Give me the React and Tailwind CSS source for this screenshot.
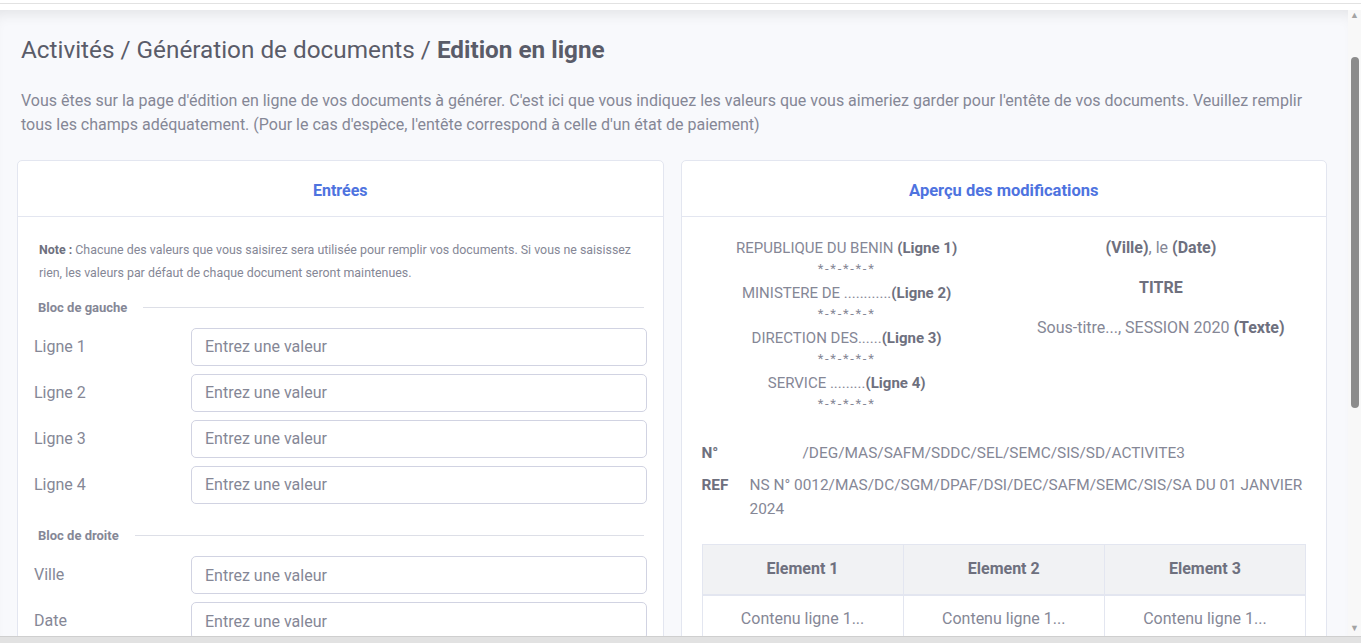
import { useState } from 'react';

const gauche = ['Ligne 1', 'Ligne 2', 'Ligne 3', 'Ligne 4'];
const droite = ['Ville', 'Date'];

const Champ = ({ label, value, onChange }) => (
  <div className="grid grid-cols-[157px_1fr] items-center">
    <label className="text-[16px] text-[#858796]">{label}</label>
    <input
      type="text"
      value={value}
      onChange={(e) => onChange(e.target.value)}
      placeholder="Entrez une valeur"
      className="h-[38px] w-full rounded-[5px] border border-[#d1d3e2] bg-white px-[13px] text-[16px] text-[#6e707e] placeholder:text-[#858796] outline-none"
    />
  </div>
);

const Legende = ({ children }) => (
  <div className="flex items-center gap-[16px] pl-[4px] pr-[3px]">
    <span className="text-[13px] font-bold text-[#858796]">{children}</span>
    <span className="h-px flex-1 bg-[#dddfe7]" />
  </div>
);

const Etoiles = () => <div className="text-[13px] leading-[20px] tracking-[1.7px] text-[#858796]">*-*-*-*-*</div>;

export default function App() {
  const [valeurs, setValeurs] = useState({});
  const maj = (k) => (v) => setValeurs((prev) => ({ ...prev, [k]: v }));

  return (
    <div className="flex h-screen flex-col overflow-hidden bg-white font-['Roboto',sans-serif]">
      <div className="h-[4px] border-b border-[#e2e2e2]" />
      <div className="h-[6px]" />
      <div className="flex min-h-0 flex-1">
        <main className="min-w-0 flex-1 overflow-hidden bg-[#f8f9fc] pl-[17px] pr-[21px] shadow-[inset_0_12px_14px_-8px_rgba(0,0,0,0.09)]">
          <h1 className="ml-[4px] mt-[25px] text-[24.3px] leading-[30px] text-[#5a5c69]">
            Activités / Génération de documents / <b className="font-bold">Edition en ligne</b>
          </h1>
          <p className="ml-[4px] mt-[24px] text-[16px] leading-[24px] text-[#858796]">
            Vous êtes sur la page d'édition en ligne de vos documents à générer. C'est ici que vous indiquez les valeurs
            que vous aimeriez garder pour l'entête de vos documents. Veuillez remplir tous les champs adéquatement. (Pour
            le cas d'espèce, l'entête correspond à celle d'un état de paiement)
          </p>

          <div className="mt-[23px] grid grid-cols-2 gap-[17px]">
            {/* Entrées */}
            <section className="rounded-[5px] border border-[#e3e6f0] bg-white">
              <div className="flex h-[56px] items-center justify-center border-b border-[#e3e6f0] pt-[5px]">
                <h2 className="text-[16px] font-bold text-[#4e73df]">Entrées</h2>
              </div>
              <div className="px-[16px] pt-[21px]">
                <p className="pl-[5px] text-[12.4px] leading-[23px] text-[#858796]">
                  <b className="text-[#6e707e]">Note :</b> Chacune des valeurs que vous saisirez sera utilisée pour remplir
                  vos documents. Si vous ne saisissez rien, les valeurs par défaut de chaque document seront maintenues.
                </p>
                <div className="mt-[14px]">
                  <Legende>Bloc de gauche</Legende>
                </div>
                <div className="mt-[10px] flex flex-col gap-[8px]">
                  {gauche.map((l) => (
                    <Champ key={l} label={l} value={valeurs[l] || ''} onChange={maj(l)} />
                  ))}
                </div>
                <div className="mt-[22px]">
                  <Legende>Bloc de droite</Legende>
                </div>
                <div className="mt-[11px] flex flex-col gap-[8px]">
                  {droite.map((l) => (
                    <Champ key={l} label={l} value={valeurs[l] || ''} onChange={maj(l)} />
                  ))}
                </div>
              </div>
            </section>

            {/* Aperçu */}
            <section className="rounded-[5px] border border-[#e3e6f0] bg-white">
              <div className="flex h-[56px] items-center justify-center border-b border-[#e3e6f0] pt-[5px]">
                <h2 className="text-[16.5px] font-bold text-[#4e73df]">Aperçu des modifications</h2>
              </div>
              <div className="px-[20px] pt-[20px]">
                <div className="-mx-[12px] grid grid-cols-2 text-center text-[#858796]">
                  <div className="text-[15px] leading-[22px]">
                    <div>
                      {valeurs['Ligne 1'] || 'REPUBLIQUE DU BENIN'} <b className="text-[#6e707e]">(Ligne 1)</b>
                    </div>
                    <Etoiles />
                    <div className="mt-[3px]">
                      {valeurs['Ligne 2'] || 'MINISTERE DE ............'}
                      <b className="text-[#6e707e]">(Ligne 2)</b>
                    </div>
                    <Etoiles />
                    <div className="mt-[3px]">
                      {valeurs['Ligne 3'] || 'DIRECTION DES......'}
                      <b className="text-[#6e707e]">(Ligne 3)</b>
                    </div>
                    <Etoiles />
                    <div className="mt-[3px]">
                      {valeurs['Ligne 4'] || 'SERVICE .........'}
                      <b className="text-[#6e707e]">(Ligne 4)</b>
                    </div>
                    <Etoiles />
                  </div>
                  <div className="flex flex-col gap-[18px] text-[16px] leading-[22px]">
                    <div>
                      <b className="text-[#6e707e]">{valeurs['Ville'] || '(Ville)'}</b>, le{' '}
                      <b className="text-[#6e707e]">{valeurs['Date'] || '(Date)'}</b>
                    </div>
                    <div className="font-bold text-[#6e707e]">TITRE</div>
                    <div>
                      Sous-titre..., SESSION 2020 <b className="text-[#6e707e]">(Texte)</b>
                    </div>
                  </div>
                </div>

                <div className="mt-[27px] text-[15.4px] leading-[24px] text-[#858796]">
                  <div className="grid grid-cols-[101px_1fr]">
                    <b className="text-[#6e707e]">N°</b>
                    <span>/DEG/MAS/SAFM/SDDC/SEL/SEMC/SIS/SD/ACTIVITE3</span>
                  </div>
                  <div className="mt-[8px] grid grid-cols-[48px_1fr]">
                    <b className="text-[#6e707e]">REF</b>
                    <span>NS N° 0012/MAS/DC/SGM/DPAF/DSI/DEC/SAFM/SEMC/SIS/SA DU 01 JANVIER 2024</span>
                  </div>
                </div>

                <table className="mt-[23px] w-full table-fixed border-collapse text-center text-[16px] text-[#858796]">
                  <thead>
                    <tr className="bg-[#f1f2f4]">
                      {['Element 1', 'Element 2', 'Element 3'].map((e) => (
                        <th key={e} className="h-[50px] border border-b-2 border-[#e3e6f0] font-bold text-[#6e707e]">
                          {e}
                        </th>
                      ))}
                    </tr>
                  </thead>
                  <tbody>
                    <tr>
                      {[1, 2, 3].map((i) => (
                        <td key={i} className="h-[48px] border border-[#e3e6f0]">
                          Contenu ligne 1...
                        </td>
                      ))}
                    </tr>
                  </tbody>
                </table>
              </div>
            </section>
          </div>
        </main>

        {/* barre de défilement */}
        <div className="flex w-[13px] flex-col items-center bg-[#f8f8f8]">
          <span className="mt-[1px] text-[9px] leading-[9px] text-[#a3a3a3]">▲</span>
          <div className="mt-[37px] h-[351px] w-[8px] rounded-[4px] bg-[#8c8c8c]" />
          <div className="flex-1" />
          <span className="mb-[3px] text-[9px] leading-[9px] text-[#a3a3a3]">▼</span>
        </div>
      </div>
      <div className="h-[7px] border-t border-[#cfcfcf] bg-[#e2e2e2]" />
    </div>
  );
}
